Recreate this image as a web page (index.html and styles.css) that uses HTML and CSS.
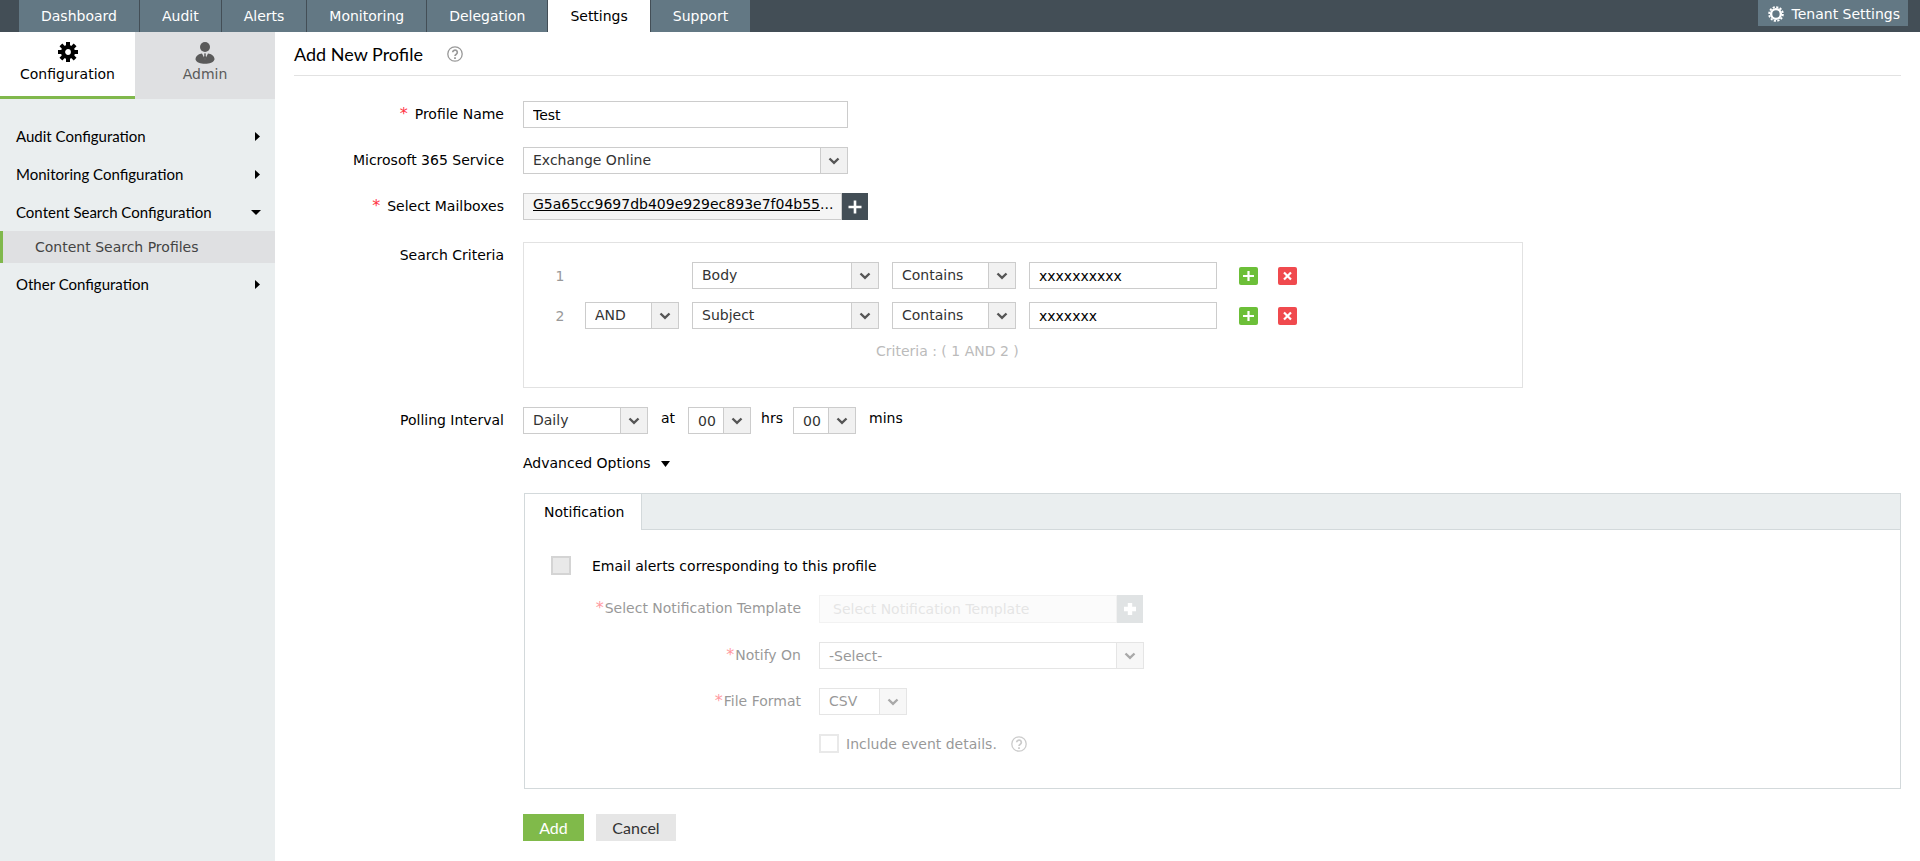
FILE: index.html
```html
<!DOCTYPE html>
<html lang="en">
<head>
<meta charset="utf-8">
<title>Add New Profile</title>
<link rel="stylesheet" href="styles.css">
</head>
<body>
<svg class="sprite" aria-hidden="true">
  <symbol id="chevron" viewBox="0 0 12 8"><path d="M1.5 1.5 6 5.8 10.500 1.500" fill="none" stroke="currentColor" stroke-width="2.400"/></symbol>
  <symbol id="plus" viewBox="0 0 14 14"><path d="M7 .5v13M.5 7h13" stroke="currentColor" stroke-width="2.600" fill="none"/></symbol>
  <symbol id="plus-bold" viewBox="0 0 14 14"><path d="M7 1v12M1 7h12" stroke="currentColor" stroke-width="4.400" fill="none"/></symbol>
  <symbol id="help" viewBox="0 0 16 16"><circle cx="8" cy="8" r="7.200" fill="none" stroke="currentColor" stroke-width="1.300"/><path d="M5.700 6.300a2.300 2.300 0 1 1 3.700 1.900C8.500 8.800 8 9.100 8 10.100" fill="none" stroke="currentColor" stroke-width="1.700"/><path d="M7.100 11.200h1.800v1.700H7.100z" fill="currentColor"/></symbol>
  <symbol id="add-row" viewBox="0 0 19 18"><rect width="19" height="18" rx="2" fill="#6cbf38"/><path d="M9.500 4v10M4 9h11" stroke="#fff" stroke-width="2.200"/></symbol>
  <symbol id="remove-row" viewBox="0 0 19 18"><rect width="19" height="18" rx="2" fill="#f04a4e"/><path d="m6 5.500 7 7M13 5.500l-7 7" stroke="#fff" stroke-width="2.200"/></symbol>
</svg>

<header class="topbar">
  <nav class="tabs">
    <a href="#">Dashboard</a>
    <a href="#">Audit</a>
    <a href="#">Alerts</a>
    <a href="#">Monitoring</a>
    <a href="#">Delegation</a>
    <a href="#" class="active">Settings</a>
    <a href="#">Support</a>
  </nav>
  <button type="button" class="tenant">
    <svg width="16" height="16" viewBox="0 0 16 16"><circle cx="8" cy="8" r="4.900" fill="none" stroke="#fff" stroke-width="2.400"/><circle cx="8" cy="8" r="6.900" fill="none" stroke="#fff" stroke-width="1.800" stroke-dasharray="2.170 1.443"/></svg>
    Tenant Settings
  </button>
</header>

<div class="shell">
  <aside class="sidebar">
    <nav class="modes">
      <a href="#" class="mode current">
        <svg width="20" height="20" viewBox="0 0 20 20"><circle cx="10" cy="10" r="5" fill="none" stroke="currentColor" stroke-width="4.200"/><g stroke="currentColor" stroke-width="4"><path d="M10 0v4M10 16v4M0 10h4M16 10h4M2.900 2.900l2.900 2.900M14.200 14.200l2.900 2.900M2.900 17.100l2.900-2.900M14.200 5.800l2.900-2.900"/></g></svg>
        <span>Configuration</span>
      </a>
      <a href="#" class="mode">
        <svg width="20" height="22" viewBox="0 0 20 22"><circle cx="10" cy="5" r="5" fill="currentColor"/><path d="M.5 17.500C.5 13.500 4 12 7 11.500l3 6 3-6c3 .5 6.500 2 6.500 6-1 3-5 4.300-9.500 4.300S1.500 20.500.5 17.500z" fill="currentColor"/><path d="M9 11.500h2l-.4 1.500.6 3L10 18l-1.200-2 .6-3z" fill="currentColor"/></svg>
        <span>Admin</span>
      </a>
    </nav>
    <nav class="menu">
      <a href="#">Audit Configuration<svg width="10" height="10" viewBox="0 0 10 10"><path d="M4 1l5 4.500L4 10z"/></svg></a>
      <a href="#">Monitoring Configuration<svg width="10" height="10" viewBox="0 0 10 10"><path d="M4 1l5 4.500L4 10z"/></svg></a>
      <a href="#">Content Search Configuration<svg width="10" height="10" viewBox="0 0 10 10"><path d="M0 3h10L5 8z"/></svg></a>
      <a href="#" class="sub">Content Search Profiles</a>
      <a href="#">Other Configuration<svg width="10" height="10" viewBox="0 0 10 10"><path d="M4 1l5 4.500L4 10z"/></svg></a>
    </nav>
  </aside>

  <main>
    <div class="title">
      <h1>Add New Profile</h1>
      <svg class="help" role="img" aria-label="Help"><use href="#help"/></svg>
    </div>
    <form>
      <div class="row">
        <label for="name"><i>*</i>Profile Name</label>
        <input id="name" class="wide" type="text" value="Test">
      </div>
      <div class="row">
        <label for="service">Microsoft 365 Service</label>
        <span class="select wide"><select id="service"><option>Exchange Online</option></select><svg><use href="#chevron"/></svg></span>
      </div>
      <div class="row">
        <label for="mailbox"><i>*</i>Select Mailboxes</label>
        <div class="picker">
          <span class="picked"><a href="#">G5a65cc9697db409e929ec893e7f04b55</a>...</span>
          <button type="button" id="mailbox" aria-label="Add mailboxes"><svg><use href="#plus"/></svg></button>
        </div>
      </div>
      <div class="row tall">
        <span class="caption">Search Criteria</span>
        <div class="criteria">
          <div class="rule">
            <span class="num">1</span>
            <span></span>
            <span class="select"><select aria-label="Field 1"><option>Body</option></select><svg><use href="#chevron"/></svg></span>
            <span class="select"><select aria-label="Condition 1"><option>Contains</option></select><svg><use href="#chevron"/></svg></span>
            <input type="text" aria-label="Value 1" value="xxxxxxxxxx">
            <span class="actions">
              <button type="button" aria-label="Add criterion"><svg><use href="#add-row"/></svg></button>
              <button type="button" aria-label="Remove criterion"><svg><use href="#remove-row"/></svg></button>
            </span>
          </div>
          <div class="rule">
            <span class="num">2</span>
            <span class="select"><select aria-label="Operator"><option>AND</option></select><svg><use href="#chevron"/></svg></span>
            <span class="select"><select aria-label="Field 2"><option>Subject</option></select><svg><use href="#chevron"/></svg></span>
            <span class="select"><select aria-label="Condition 2"><option>Contains</option></select><svg><use href="#chevron"/></svg></span>
            <input type="text" aria-label="Value 2" value="xxxxxxx">
            <span class="actions">
              <button type="button" aria-label="Add criterion"><svg><use href="#add-row"/></svg></button>
              <button type="button" aria-label="Remove criterion"><svg><use href="#remove-row"/></svg></button>
            </span>
          </div>
          <p>Criteria : ( 1 AND 2 )</p>
        </div>
      </div>
      <div class="row">
        <label for="interval">Polling Interval</label>
        <div class="polling">
          <span class="select daily"><select id="interval"><option>Daily</option></select><svg><use href="#chevron"/></svg></span>
          <span class="at">at</span>
          <span class="select time"><select id="hrs"><option>00</option></select><svg><use href="#chevron"/></svg></span>
          <label for="hrs">hrs</label>
          <span class="select time"><select id="mins"><option>00</option></select><svg><use href="#chevron"/></svg></span>
          <label for="mins" class="mins">mins</label>
        </div>
      </div>
      <div class="row">
        <span></span>
        <button type="button" class="advanced">Advanced Options<svg width="9" height="8" viewBox="0 0 9 8"><path d="M0 2h9L4.500 8z"/></svg></button>
      </div>
      <div class="row">
        <span></span>
        <section class="panel">
          <div class="panel-tabs"><button type="button">Notification</button></div>
          <div class="panel-body">
            <div class="email"><input type="checkbox" id="email"><label for="email">Email alerts corresponding to this profile</label></div>
            <div class="disabled">
              <div class="opt">
                <label for="template"><i>*</i>Select Notification Template</label>
                <div class="template"><input id="template" type="text" placeholder="Select Notification Template" disabled><button type="button" aria-label="Add template" disabled><svg><use href="#plus-bold"/></svg></button></div>
              </div>
              <div class="opt">
                <label for="notify"><i>*</i>Notify On</label>
                <span class="select wide notify"><select id="notify" disabled><option>-Select-</option></select><svg><use href="#chevron"/></svg></span>
              </div>
              <div class="opt">
                <label for="format"><i>*</i>File Format</label>
                <span class="select format"><select id="format" disabled><option>CSV</option></select><svg><use href="#chevron"/></svg></span>
              </div>
              <div class="opt">
                <span></span>
                <span class="include"><label><input type="checkbox" disabled>Include event details.</label><svg class="help" role="img" aria-label="Help"><use href="#help"/></svg></span>
              </div>
            </div>
          </div>
        </section>
      </div>
      <div class="row">
        <span></span>
        <div class="buttons"><button type="submit" class="add">Add</button><button type="button" class="cancel">Cancel</button></div>
      </div>
    </form>
  </main>
</div>
</body>
</html>
```

FILE: styles.css
```css
* { box-sizing: border-box; }

body {
  margin: 0;
  min-height: 100vh;
  display: flex;
  flex-direction: column;
  background: #fff;
  color: #000;
  font: 14px/18px "DejaVu Sans", sans-serif;
}

a { color: inherit; text-decoration: none; }
button, input, select { font: inherit; color: inherit; border-radius: 0; margin: 0; }
button { border: 0; padding: 0; background: none; cursor: pointer; }
svg { display: block; }
i { font-style: normal; font-size: 16px; line-height: 16px; color: #ff3344; }
.sprite { display: none; }

/* Top bar */
.topbar {
  display: flex;
  justify-content: space-between;
  align-items: flex-start;
  height: 32px;
  padding: 0 12px 0 19px;
  background: #434e56;
}
.tabs { display: flex; gap: 1px; }
.tabs a {
  padding: 0 22px;
  background: #637884;
  color: #fff;
  line-height: 32px;
}
.tabs .active { background: #fff; color: #000; }
.tenant {
  display: flex;
  align-items: center;
  gap: 8px;
  height: 26px;
  padding: 2px 8px 0 10px;
  background: #637884;
  color: #fff;
}

/* Sidebar */
.shell { display: flex; flex: 1; }
.sidebar { flex: 0 0 275px; background: #eaeeef; }
.modes { display: grid; grid-template-columns: 135px 1fr; height: 67px; }
.mode {
  display: flex;
  flex-direction: column;
  align-items: center;
  justify-content: space-between;
  padding: 10px 0 16px;
  background: #dfe0e2;
  color: #5a5a5a;
}
.mode.current { padding-bottom: 13px; border-bottom: 3px solid #80b84c; background: #fff; color: #000; }
.menu { padding-top: 18px; font: 15px/38px Lato, sans-serif; }
.menu a {
  display: flex;
  justify-content: space-between;
  align-items: center;
  padding: 0 14px 0 16px;
}
.menu .sub {
  margin-bottom: 2px;
  padding: 0 0 0 32px;
  border-left: 3px solid #80b84c;
  background: #dfe0e2;
  color: #444;
  font: 14px/32px "DejaVu Sans", sans-serif;
}

/* Page */
main { flex: 1; min-width: 0; padding: 0 19px 18px; }
.title {
  display: flex;
  align-items: center;
  gap: 24px;
  height: 44px;
  border-bottom: 1px solid #e2e2e2;
}
h1 { margin: 0; font: 18px/24px Lato, sans-serif; }
.help { width: 16px; height: 16px; color: #999; }
form { display: grid; gap: 19px; padding-top: 25px; }
.row { display: grid; grid-template-columns: 210px minmax(0, 1fr); column-gap: 19px; align-items: center; }
.row > label, .caption { text-align: right; }
.row > label { padding-bottom: 2px; }
.row > label i { margin-right: 7px; }
.tall { align-items: start; padding-top: 3px; }
.caption { padding-top: 4px; }

input[type="text"] {
  height: 27px;
  padding: 0 9px;
  border: 1px solid #ccc;
  background: #fff;
  min-width: 0;
}
.wide { width: 325px; }

/* Drop-downs */
.select { position: relative; display: block; height: 27px; }
.select select {
  appearance: none;
  display: block;
  width: 100%;
  height: 27px;
  padding: 0 30px 2px 9px;
  border: 1px solid #ccc;
  background: linear-gradient(to left, #f1f1f1 26px, #ccc 26px, #ccc 27px, #fff 27px);
  color: #333;
  opacity: 1;
}
.time select, .notify select { padding-bottom: 0; }
.select svg {
  position: absolute;
  right: 8px;
  top: 10px;
  width: 12px;
  height: 8px;
  color: #555;
  pointer-events: none;
}

.picker { display: flex; height: 27px; }
.picked { width: 319px; padding: 1px 9px; border: 1px solid #ccc; background: #f5f5f5; }
.picked a { text-decoration: underline; }
.picker button { display: grid; place-items: center; width: 26px; background: #434e56; color: #fff; }
.picker svg, .template svg { width: 14px; height: 14px; }

/* Search criteria */
.criteria {
  max-width: 1000px;
  height: 146px;
  padding: 19px 24px;
  border: 1px solid #e2e2e2;
  display: grid;
  gap: 13px;
  align-content: start;
}
.rule {
  display: grid;
  grid-template-columns: 24px 94px 187px 124px 188px auto;
  column-gap: 13px;
  align-items: center;
}
.num { color: #999; text-align: center; }
.actions { display: flex; gap: 20px; padding-left: 9px; }
.actions svg { width: 19px; height: 18px; }
.criteria p { margin: 0; padding-left: 328px; color: #bbb; }

.polling { display: flex; }
.daily { width: 125px; }
.at { padding: 2px 13px 0; }
.time { width: 63px; }
.polling label { padding: 2px 10px 0; }
.polling .mins { padding-left: 13px; }

.advanced { display: flex; align-items: center; gap: 10px; justify-self: start; line-height: 20px; }

/* Notification panel */
.panel { margin: 1px 0 6px 1px; border: 1px solid #d3d9db; }
.panel-tabs { display: flex; height: 36px; background: #eaeeef; border-bottom: 1px solid #d3d9db; }
.panel-tabs button {
  height: 36px;
  padding: 0 17px 0 19px;
  border-right: 1px solid #d3d9db;
  background: #fff;
}
.panel-body { padding: 26px 26px 35px; }
input[type="checkbox"] {
  appearance: none;
  width: 20px;
  height: 19px;
  border: 2px solid #d4d4d4;
  background: #e9e9e9;
}
.email { display: flex; align-items: center; gap: 21px; }
.disabled { display: grid; gap: 19px; padding-top: 20px; opacity: 0.5; }
.opt { display: grid; grid-template-columns: 250px minmax(0, 1fr); column-gap: 18px; align-items: center; }
.opt > label { padding-bottom: 2px; text-align: right; color: #333; }
.opt > label i { margin-right: 1px; }
.template { display: flex; height: 28px; }
.template input[type="text"] { width: 298px; height: 28px; padding: 0 9px 0 13px; border-color: #e6e6e6; background: #f9f9f9; }
.template input::placeholder { color: #ccc; opacity: 1; }
.template button { display: grid; place-items: center; width: 26px; background: #c3c9cb; color: #fff; }
.format { width: 88px; }
.include { display: flex; align-items: center; gap: 14px; color: #333; }
.include label { display: flex; align-items: center; gap: 7px; }
.include input[type="checkbox"] { background: #fff; }

.buttons { display: flex; gap: 12px; font: 16px/27px Lato, sans-serif; }
.add { width: 61px; background: #80ba4a; color: #fff; }
.cancel { width: 80px; background: #e6e6e6; color: #333; }
```
